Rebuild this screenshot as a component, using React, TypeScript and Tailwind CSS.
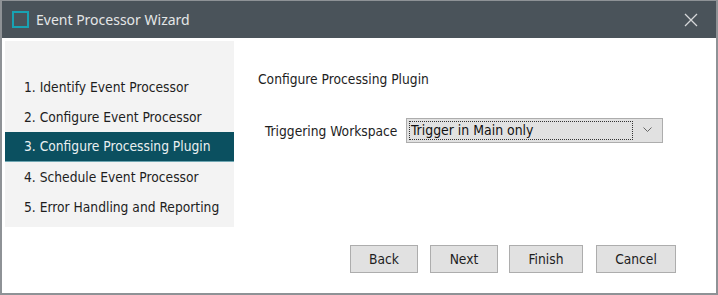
const steps = [
  'Identify Event Processor',
  'Configure Event Processor',
  'Configure Processing Plugin',
  'Schedule Event Processor',
  'Error Handling and Reporting',
];

const font = { fontFamily: '"DejaVu Sans Condensed", "DejaVu Sans", sans-serif' };

function WizButton({ label, width }: { label: string; width: string }) {
  return (
    <button
      className={`${width} h-[28px] bg-[#e1e1e1] border border-[#adadad] text-[13.7px] text-[#1e1e1e]`}
      style={font}
    >
      {label}
    </button>
  );
}

export default function App() {
  const active = 2;

  return (
    <div className="w-[718px] h-[295px] bg-white border-x-2 border-b-2 border-t border-[#8e9296] flex flex-col overflow-hidden">
      {/* Title bar */}
      <div className="h-[37px] shrink-0 bg-[#4a535a] flex items-center pl-[10px] pr-[18px]">
        <div className="w-[17px] h-[17px] border-2 border-[#18a2b3]" />
        <span
          className="ml-[7px] text-[14px] text-[#e4e6e7]"
          style={{ fontFamily: '"Noto Sans", "Open Sans", sans-serif' }}
        >
          Event Processor Wizard
        </span>
        <svg className="ml-auto" width="14" height="14" viewBox="0 0 14 14">
          <path d="M1 1 L13 13 M13 1 L1 13" stroke="#d6d8d9" strokeWidth="1.3" fill="none" />
        </svg>
      </div>

      <div className="flex flex-1 pt-[3px]">
        {/* Steps */}
        <div className="ml-[3px] w-[229px] h-[186px] bg-[#f3f3f3] pt-[31px]">
          {steps.map((s, i) => (
            <div
              key={i}
              className={`h-[30px] pl-[19px] flex items-center text-[13.7px] ${
                i === active
                  ? 'bg-[#0b5060] text-[#e9eff1] border-b border-[#6fa6b2]'
                  : 'text-[#1e1e1e]'
              }`}
              style={font}
            >
              {i + 1}. {s}
            </div>
          ))}
        </div>

        {/* Content */}
        <div className="flex-1 flex flex-col pl-[24px] pr-[40px] pb-[20px]" style={font}>
          <div className="mt-[28px] text-[13.7px] text-[#1e1e1e]">Configure Processing Plugin</div>

          <div className="mt-[28px] ml-[7px] flex items-center">
            <span className="w-[134px] whitespace-nowrap text-[13.7px] text-[#1e1e1e] pt-[2px]">Triggering Workspace</span>
            <div className="ml-[7px] w-[257px] h-[25px] bg-[#e1e1e1] border border-[#adadad] flex items-center pl-[2px] pr-[10px]">
              <div className="flex-1 h-[19px] border border-dotted border-[#333] flex items-center pl-[1px] text-[13.9px] text-[#111]">
                Trigger in Main only
              </div>
              <svg className="ml-[10px]" width="9" height="6" viewBox="0 0 9 6">
                <path d="M0.5 0.5 L4.5 4.5 L8.5 0.5" stroke="#666" strokeWidth="1" fill="none" />
              </svg>
            </div>
          </div>

          <div className="mt-auto flex justify-end">
            <WizButton label="Back" width="w-[68px]" />
            <div className="w-[12px]" />
            <WizButton label="Next" width="w-[68px]" />
            <div className="w-[11px]" />
            <WizButton label="Finish" width="w-[74px]" />
            <div className="w-[13px]" />
            <WizButton label="Cancel" width="w-[80px]" />
          </div>
        </div>
      </div>
    </div>
  );
}
